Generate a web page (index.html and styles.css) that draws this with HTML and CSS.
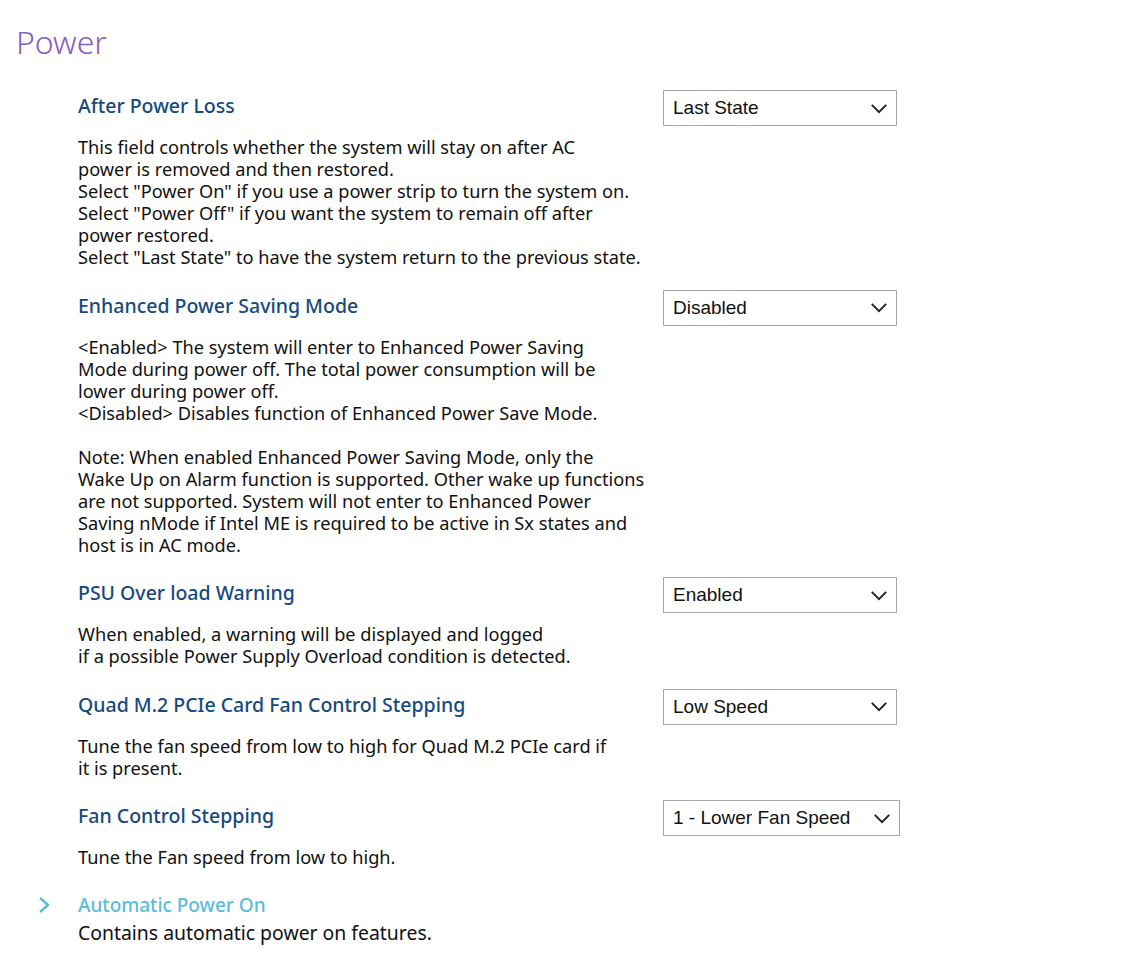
FILE: index.html
```html
<!DOCTYPE html>
<html>
<head>
<meta charset="utf-8">
<link rel="stylesheet" href="styles.css">
</head>
<body>
<div class="page">
  <h1 class="title">Power</h1>
  <div class="settings">
    <section class="setting">
      <div class="row">
        <h2 class="label">After Power Loss</h2>
        <div class="select"><span>Last State</span><svg class="chev" viewBox="0 0 20 12" width="18" height="11"><path d="M2 2 L10 10 L18 2" fill="none" stroke="#222" stroke-width="2.2"/></svg></div>
      </div>
      <p class="desc">This field controls whether the system will stay on after AC<br>power is removed and then restored.<br>Select "Power On" if you use a power strip to turn the system on.<br>Select "Power Off" if you want the system to remain off after<br>power restored.<br>Select "Last State" to have the system return to the previous state.</p>
    </section>
    <section class="setting">
      <div class="row">
        <h2 class="label">Enhanced Power Saving Mode</h2>
        <div class="select"><span>Disabled</span><svg class="chev" viewBox="0 0 20 12" width="18" height="11"><path d="M2 2 L10 10 L18 2" fill="none" stroke="#222" stroke-width="2.2"/></svg></div>
      </div>
      <p class="desc">&lt;Enabled&gt; The system will enter to Enhanced Power Saving<br>Mode during power off. The total power consumption will be<br>lower during power off.<br>&lt;Disabled&gt; Disables function of Enhanced Power Save Mode.<br><br>Note: When enabled Enhanced Power Saving Mode, only the<br>Wake Up on Alarm function is supported. Other wake up functions<br>are not supported. System will not enter to Enhanced Power<br>Saving nMode if Intel ME is required to be active in Sx states and<br>host is in AC mode.</p>
    </section>
    <section class="setting">
      <div class="row">
        <h2 class="label">PSU Over load Warning</h2>
        <div class="select"><span>Enabled</span><svg class="chev" viewBox="0 0 20 12" width="18" height="11"><path d="M2 2 L10 10 L18 2" fill="none" stroke="#222" stroke-width="2.2"/></svg></div>
      </div>
      <p class="desc">When enabled, a warning will be displayed and logged<br>if a possible Power Supply Overload condition is detected.</p>
    </section>
    <section class="setting">
      <div class="row">
        <h2 class="label">Quad M.2 PCIe Card Fan Control Stepping</h2>
        <div class="select"><span>Low Speed</span><svg class="chev" viewBox="0 0 20 12" width="18" height="11"><path d="M2 2 L10 10 L18 2" fill="none" stroke="#222" stroke-width="2.2"/></svg></div>
      </div>
      <p class="desc">Tune the fan speed from low to high for Quad M.2 PCIe card if<br>it is present.</p>
    </section>
    <section class="setting">
      <div class="row">
        <h2 class="label">Fan Control Stepping</h2>
        <div class="select wide"><span>1 - Lower Fan Speed</span><svg class="chev" viewBox="0 0 20 12" width="18" height="11"><path d="M2 2 L10 10 L18 2" fill="none" stroke="#222" stroke-width="2.2"/></svg></div>
      </div>
      <p class="desc">Tune the Fan speed from low to high.</p>
    </section>
  </div>
  <div class="submenu">
    <div class="sub-row">
      <svg class="arrow" viewBox="0 0 12 18" width="12" height="18"><path d="M2 2 L10 9 L2 16" fill="none" stroke="#5bbcdc" stroke-width="2.4"/></svg>
      <span class="sub-label">Automatic Power On</span>
    </div>
    <p class="sub-desc">Contains automatic power on features.</p>
  </div>
</div>
</body>
</html>
```
FILE: styles.css
```css
html, body {
  margin: 0;
  padding: 0;
  background: #fff;
}
body {
  font-family: "Noto Sans", "Liberation Sans", sans-serif;
  color: #111;
}
.page {
  padding: 20px 16px 0 16px;
}
.title {
  margin: 0;
  font-size: 32px;
  font-weight: 300;
  color: #8a5ec0;
  line-height: 44px;
}
.settings {
  padding-left: 62px;
  margin-top: 26px;
}
.setting {
  margin-bottom: 21.6px;
}
.row {
  display: grid;
  grid-template-columns: 585px auto;
  align-items: start;
}
.label {
  margin: 0;
  font-size: 19.5px;
  font-weight: 500;
  color: #154a7e;
  line-height: 32px;
  white-space: nowrap;
}
.select {
  box-sizing: border-box;
  width: 234px;
  height: 36px;
  border: 1px solid #a8a8a8;
  display: flex;
  align-items: center;
  justify-content: space-between;
  padding: 0 8px 0 9px;
  font-family: "Liberation Sans", Arial, sans-serif;
  font-size: 19px;
  color: #111;
}
.select.wide {
  width: 237px;
}
.desc {
  margin: 10px 0 0 0;
  font-size: 18.2px;
  line-height: 22px;
  white-space: nowrap;
}
.submenu {
  margin-top: 16px;
}
.sub-row {
  display: flex;
  align-items: center;
  height: 30px;
}
.arrow {
  margin-left: 22px;
  margin-right: 28px;
}
.sub-label {
  font-size: 19px;
  font-weight: 500;
  color: #5bbcdc;
}
.sub-desc {
  margin: 0 0 0 62px;
  font-size: 19.4px;
  line-height: 26px;
}
```
